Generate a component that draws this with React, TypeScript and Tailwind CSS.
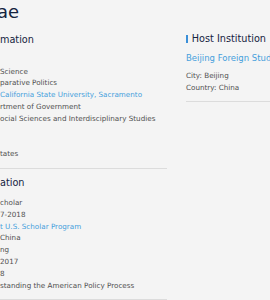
const sans = "font-['DejaVu_Sans',sans-serif]";

const profileRows = [
  { text: "Science" },
  { text: "parative Politics" },
  { text: "California State University, Sacramento", link: true },
  { text: "rtment of Government" },
  { text: "ocial Sciences and Interdisciplinary Studies" },
  { text: "" },
  { text: "" },
  { text: "tates" },
];

const grantRows = [
  { text: "cholar" },
  { text: "7-2018" },
  { text: "t U.S. Scholar Program", link: true },
  { text: "China" },
  { text: "ng" },
  { text: "2017" },
  { text: "8" },
  { text: "standing the American Policy Process" },
];

function Rows({ rows }: { rows: { text: string; link?: boolean }[] }) {
  return (
    <div className="flex flex-col">
      {rows.map((row, i) => (
        <div
          key={i}
          className={`h-[11.85px] whitespace-nowrap text-[7.2px] leading-[11.85px] ${
            row.link ? "text-[#45a0dc]" : "text-[#505050]"
          }`}
        >
          {row.text}
        </div>
      ))}
    </div>
  );
}

export default function App() {
  return (
    <div className={`flex h-[300px] w-[270px] gap-[19px] overflow-hidden bg-[#f4f4f4] ${sans}`}>
      <div className="w-[167px] shrink-0">
        <h1 className="-ml-[3px] text-[18px] leading-[24px] text-[#14233f]">ae</h1>
        <h2 className="mt-[9px] text-[9.7px] leading-[14px] text-[#14233f]">mation</h2>
        <div className="mt-[18.5px]">
          <Rows rows={profileRows} />
        </div>
        <div className="mt-[7.7px] border-t border-[#dcdcdc]" />
        <h2 className="mt-[7px] text-[9.7px] leading-[14px] text-[#14233f]">ation</h2>
        <div className="mt-[7px]">
          <Rows rows={grantRows} />
        </div>
        <div className="mt-[7.4px] border-t border-[#dcdcdc]" />
      </div>

      <div className="min-w-0 flex-1">
        <div className="mt-[32px] flex items-center gap-[3.5px]">
          <span className="h-[7.5px] w-[2.3px] bg-[#3a8fd8]" />
          <h2 className="whitespace-nowrap text-[9.7px] leading-[14px] text-[#14233f]">
            Host Institution
          </h2>
        </div>
        <div className="mt-[6px] whitespace-nowrap text-[8.5px] leading-[12px] text-[#45a0dc]">
          Beijing Foreign Studies University
        </div>
        <div className="mt-[6px]">
          <Rows rows={[{ text: "City: Beijing" }, { text: "Country: China" }]} />
        </div>
        <div className="mt-[7px] border-t border-[#dcdcdc]" />
      </div>
    </div>
  );
}
